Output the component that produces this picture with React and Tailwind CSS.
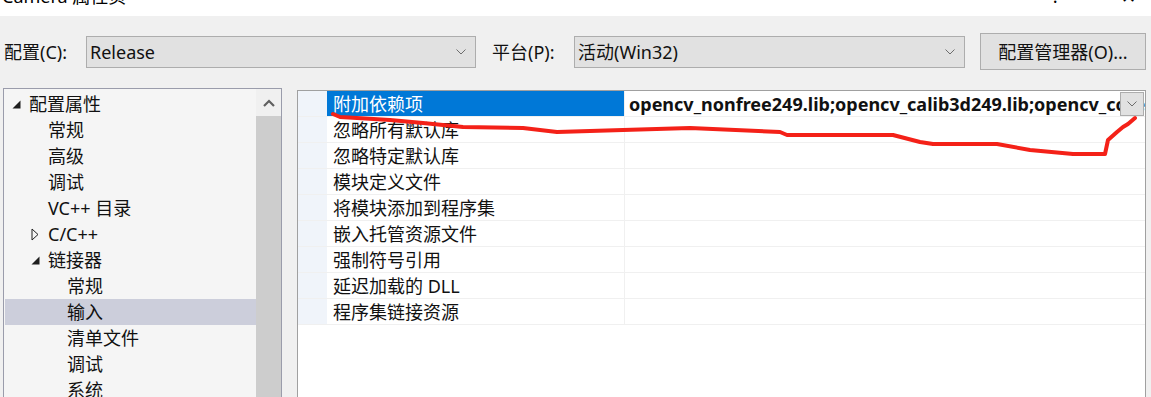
import React from "react";

const FONT = { fontFamily: '"Noto Sans", "Noto Sans CJK SC", sans-serif' };

function Chevron({ className = "" }) {
  return (
    <svg width="10" height="6" viewBox="0 0 10 6" className={className}>
      <path d="M0.5 0.5 L5 5 L9.5 0.5" fill="none" stroke="#6d6d6d" strokeWidth="1" />
    </svg>
  );
}

function Select({ text, width }) {
  return (
    <div
      className="h-[32px] border border-[#adadad] bg-[#e1e1e1] flex items-center justify-between pl-[3px] pr-[9px]"
      style={{ width }}
    >
      <span className="text-[18px] text-[#111] leading-none">{text}</span>
      <Chevron />
    </div>
  );
}

function ExpandedTri() {
  return (
    <svg width="9" height="9" viewBox="0 0 9 9">
      <polygon points="8.5,0.5 8.5,8.5 0.5,8.5" fill="#1e1e1e" />
    </svg>
  );
}

function CollapsedTri() {
  return (
    <svg width="8" height="13" viewBox="0 0 8 13">
      <polygon points="1,1 7,6.5 1,12" fill="none" stroke="#1e1e1e" strokeWidth="1" />
    </svg>
  );
}

const tree = [
  { level: 0, text: "配置属性", tri: "open" },
  { level: 1, text: "常规" },
  { level: 1, text: "高级" },
  { level: 1, text: "调试" },
  { level: 1, text: "VC++ 目录" },
  { level: 1, text: "C/C++", tri: "closed" },
  { level: 1, text: "链接器", tri: "open" },
  { level: 2, text: "常规" },
  { level: 2, text: "输入", selected: true },
  { level: 2, text: "清单文件" },
  { level: 2, text: "调试" },
  { level: 2, text: "系统" },
];

const props = [
  "附加依赖项",
  "忽略所有默认库",
  "忽略特定默认库",
  "模块定义文件",
  "将模块添加到程序集",
  "嵌入托管资源文件",
  "强制符号引用",
  "延迟加载的 DLL",
  "程序集链接资源",
];

export default function App() {
  return (
    <div className="relative w-[1151px] h-[397px] overflow-hidden bg-[#f0f0f0] text-[#111]" style={FONT}>
      {/* title bar */}
      <div className="h-[16px] bg-white overflow-hidden relative">
        <div className="absolute left-[2px] top-[-14px] text-[18px] leading-[20px] text-black">
          Camera 属性页
        </div>
        <div className="absolute left-[1052px] top-[-14px] text-[18px] leading-[20px] text-black">?</div>
        <div className="absolute left-[1121px] top-[-14px] text-[18px] leading-[20px] text-black">✕</div>
      </div>

      {/* top toolbar */}
      <div className="pt-[17px] flex items-center h-[54px]">
        <span className="ml-[4px] w-[82px] text-[18px] leading-none">配置(C):</span>
        <Select text="Release" width={390} />
        <span className="ml-[16px] w-[82px] text-[18px] leading-none">平台(P):</span>
        <Select text="活动(Win32)" width={391} />
        <div className="ml-[15px] w-[166px] h-[37px] border border-[#adadad] bg-[#e1e1e1] flex items-center justify-center text-[18px] leading-none">
          配置管理器(O)...
        </div>
      </div>

      {/* lower area */}
      <div className="flex items-start pl-[3px] mt-[18px]">
        {/* tree panel */}
        <div className="w-[279px] h-[330px] border border-[#9a9cab] bg-[#f5f5f5] flex">
          <div className="flex-1 pt-[2px]">
            {tree.map((t, i) => (
              <div
                key={i}
                className={`h-[26px] flex items-center relative ml-[1px] ${t.selected ? "bg-[#cccedb]" : ""}`}
              >
                {t.tri && (
                  <div
                    className={`absolute flex items-center ${
                      t.level === 0 ? "left-[7px]" : "left-[26px]"
                    }`}
                  >
                    {t.tri === "open" ? <ExpandedTri /> : <CollapsedTri />}
                  </div>
                )}
                <span
                  className={`text-[18px] leading-none ${
                    t.level === 0 ? "pl-[24px]" : t.level === 1 ? "pl-[43px]" : "pl-[62px]"
                  }`}
                >
                  {t.text}
                </span>
              </div>
            ))}
          </div>
          <div className="w-[25px] flex flex-col">
            <div className="h-[27px] flex items-center justify-center bg-[#f0f0f0]">
              <svg width="12" height="8" viewBox="0 0 12 8">
                <path d="M1 7 L6 2 L11 7" fill="none" stroke="#606060" strokeWidth="2.2" />
              </svg>
            </div>
            <div className="flex-1 bg-[#cdcdcd]" />
          </div>
        </div>

        {/* property grid */}
        <div className="ml-[15px] mt-[2px] w-[849px] h-[330px] border border-[#a0a0a0] bg-white">
          {props.map((p, i) => (
            <div key={i} className="h-[26px] flex border-b border-[#f0f0f0]">
              <div className="w-[29px] bg-[#f0f4fa]" />
              <div
                className={`w-[298px] flex items-center pl-[6px] border-r border-[#f0f0f0] ${
                  i === 0 ? "bg-[#0078d7] text-white" : ""
                }`}
              >
                <span className="text-[18px] leading-none">{p}</span>
              </div>
              <div className="flex-1 relative flex items-center overflow-hidden">
                {i === 0 && (
                  <>
                    <span className="pl-[4px] text-[18px] font-bold leading-none whitespace-nowrap text-[#111]">
                      opencv_nonfree249.lib;opencv_calib3d249.lib;opencv_core249.lib
                    </span>
                    <div className="absolute right-[1px] top-[1px] w-[24px] h-[24px] border border-[#adadad] bg-[#e1e1e1] flex items-center justify-center">
                      <Chevron />
                    </div>
                  </>
                )}
              </div>
            </div>
          ))}
        </div>
      </div>

      {/* red annotation */}
      <svg className="absolute left-0 top-0 pointer-events-none" width="1151" height="397">
        <path
          d="M333 114 L340 117 L357 118 L390 120 L423 123 L463 127 L523 128 L557 132 L623 130 L690 128 L780 132 L787 135 L893 135 L920 142 L933 144 L997 144 L1030 150 L1073 154 L1105 154 L1108 140 L1117 132 L1123 127 L1128 124 L1135 118"
          fill="none"
          stroke="#f42118"
          strokeWidth="4"
          strokeLinecap="round"
          strokeLinejoin="round"
        />
      </svg>
    </div>
  );
}
